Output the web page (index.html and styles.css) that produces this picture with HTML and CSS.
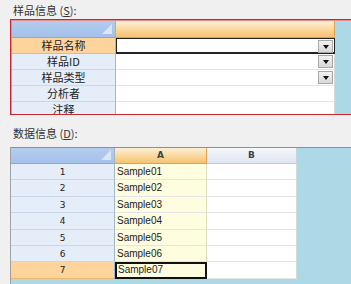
FILE: index.html
```html
<!DOCTYPE html>
<html lang="zh">
<head>
  <meta charset="UTF-8">
  <title>样品信息</title>
  <link rel="stylesheet" href="styles.css">
</head>
<body>
  <div class="label">样品信息 (<u>S</u>):</div>
  <div class="panel">
    <div class="grid top">
      <div class="corner"></div>
      <div class="colhead sel"></div>
      <div class="fill"></div>

      <div class="rowhead sel">样品名称</div>
      <div class="cell current"><span class="drop"></span></div>
      <div class="fill"></div>

      <div class="rowhead">样品ID</div>
      <div class="cell"><span class="drop"></span></div>
      <div class="fill"></div>

      <div class="rowhead">样品类型</div>
      <div class="cell"><span class="drop"></span></div>
      <div class="fill"></div>

      <div class="rowhead">分析者</div>
      <div class="cell"></div>
      <div class="fill"></div>

      <div class="rowhead">注释</div>
      <div class="cell"></div>
      <div class="fill"></div>
    </div>
  </div>

  <div class="label second">数据信息 (<u>D</u>):</div>
  <div class="sheet">
    <div class="grid data">
      <div class="corner"></div>
      <div class="colhead sel">A</div>
      <div class="colhead">B</div>
      <div class="fill"></div>

      <div class="rowhead">1</div><div class="cell a">Sample01</div><div class="cell"></div><div class="fill"></div>
      <div class="rowhead">2</div><div class="cell a">Sample02</div><div class="cell"></div><div class="fill"></div>
      <div class="rowhead">3</div><div class="cell a">Sample03</div><div class="cell"></div><div class="fill"></div>
      <div class="rowhead">4</div><div class="cell a">Sample04</div><div class="cell"></div><div class="fill"></div>
      <div class="rowhead">5</div><div class="cell a">Sample05</div><div class="cell"></div><div class="fill"></div>
      <div class="rowhead">6</div><div class="cell a">Sample06</div><div class="cell"></div><div class="fill"></div>
      <div class="rowhead sel">7</div><div class="cell a current">Sample07</div><div class="cell"></div><div class="fill"></div>
    </div>
  </div>
</body>
</html>
```

FILE: styles.css
```css
* { margin: 0; padding: 0; box-sizing: border-box; }
body {
  font-family: "Noto Sans CJK SC", "Liberation Sans", sans-serif;
  font-size: 11px;
  color: #222;
  background-color: #f0f0f0;
  width: 351px;
  height: 284px;
  overflow: hidden;
}
.label {
  height: 19px;
  padding: 3px 0 0 13px;
  line-height: 14px;
  color: #333;
}
.label.second {
  height: 32px;
  padding-top: 11px;
}
.panel {
  margin-left: 10px;
  width: 350px;
  height: 96px;
  border: 1px solid #c8282d;
  box-shadow: inset 0 0 0 1px #e98b8b;
  padding: 1px;
  overflow: hidden;
  background-color: #add8e6;
}
.sheet {
  margin-left: 10px;
  width: 350px;
  height: 140px;
  border-top: 1px solid #8f8f8f;
  border-left: 1px solid #a0a0a0;
  overflow: hidden;
  background-color: #add8e6;
}
.grid {
  display: grid;
  grid-auto-rows: 16px;
}
.grid.top {
  grid-template-columns: 104px 219px 1fr;
  grid-template-rows: 17px;
}
.grid.data {
  grid-template-columns: 104px 92px 90px 1fr;
  grid-template-rows: 16px;
  grid-auto-rows: 16.4px;
}
.corner {
  background: linear-gradient(#b4cdee, #a3c1ea);
  border-right: 1px solid #9cb4d2;
  border-bottom: 1px solid #8fa9cc;
  position: relative;
}
.corner::after {
  content: "";
  position: absolute;
  right: 3px;
  bottom: 3px;
  border-left: 10px solid transparent;
  border-bottom: 10px solid #dbe6f5;
}
.colhead {
  background: linear-gradient(#f6f8fb, #dde5ef);
  border-right: 1px solid #c9d2dd;
  border-bottom: 1px solid #c0cbd8;
  text-align: center;
  font-family: "DejaVu Sans", sans-serif;
  font-size: 9px;
  font-weight: bold;
  line-height: 15px;
  color: #444;
}
.colhead.sel {
  background: linear-gradient(#fdf0d6, #f8d08c 70%, #f5c274);
  border-right: 1px solid #f0a040;
  border-bottom: 1px solid #e8a048;
}
.rowhead {
  background-color: #e5edf8;
  border-right: 1px solid #9fb6d2;
  border-bottom: 1px solid #c7d6ea;
  text-align: center;
  line-height: 15px;
  color: #222;
}
.data .rowhead {
  font-family: "DejaVu Sans", sans-serif;
  font-size: 9px;
  line-height: 17px;
}
.rowhead.sel {
  background-color: #fdd49b;
  border-bottom-color: #f2b86a;
}
.cell {
  background-color: #fff;
  border-right: 1px solid #d8d8d8;
  border-bottom: 1px solid #e4e4e4;
  position: relative;
  font-family: "Liberation Sans", sans-serif;
  font-size: 10px;
  line-height: 15px;
  padding-left: 2px;
}
.cell.a {
  background-color: #fffde0;
  border-right-color: #e2dcb8;
}
.top .cell.current {
  border: 1px solid #222;
  border-bottom-width: 2px;
}
.data .cell.current {
  border: 2px solid #111;
  padding-left: 1px;
  line-height: 12px;
}
.fill {
  background-color: #add8e6;
}
.drop {
  position: absolute;
  right: 1px;
  top: 1px;
  width: 15px;
  height: 13px;
  background: linear-gradient(#f2f2f2, #d8d8d8);
  border: 1px solid #a8a8a8;
}
.drop::after {
  content: "";
  position: absolute;
  left: 4px;
  top: 4px;
  border-left: 3px solid transparent;
  border-right: 3px solid transparent;
  border-top: 4px solid #111;
}
```
